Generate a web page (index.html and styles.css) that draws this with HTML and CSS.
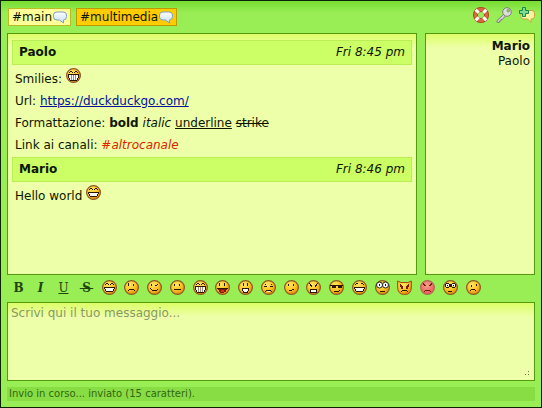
FILE: index.html
```html
<!DOCTYPE html>
<html lang="it">
<head>
<meta charset="utf-8">
<title>Chat</title>
<link rel="stylesheet" href="styles.css">
</head>
<body>
<svg class="defs" aria-hidden="true">
  <defs>
    <radialGradient id="gold" cx="40%" cy="30%" r="70%">
      <stop offset="0" stop-color="#ffe660"/><stop offset=".55" stop-color="#fcc526"/><stop offset="1" stop-color="#e08a10"/>
    </radialGradient>
    <radialGradient id="rose" cx="45%" cy="35%" r="70%">
      <stop offset="0" stop-color="#f4a08c"/><stop offset="1" stop-color="#e85058"/>
    </radialGradient>
    <linearGradient id="bubbleFill" x2="0" y2="1"><stop offset="0" stop-color="#fff"/><stop offset="1" stop-color="#c4def4"/></linearGradient>
  </defs>
  <symbol id="face" viewBox="0 0 15 15"><circle cx="7.5" cy="7.5" r="6.9" fill="url(#gold)" stroke="#8a5a24" stroke-width="1.2"/></symbol>
  <symbol id="bubble" viewBox="0 0 14 13"><path d="M4 1h6Q13.500 1 13.500 4v1.500Q13.500 9 10.500 9V12L6.500 9H4Q.5 9 .5 6V4Q.5 1 4 1z" fill="url(#bubbleFill)" stroke="#7aa0c8"/></symbol>
  <symbol id="grin" viewBox="0 0 15 15"><use href="#face"/><path class="px" d="M4 3h2v1h-2zM3 4h1v1h-1zM6 4h1v1h-1zM9 3h2v1h-2zM8 4h1v1h-1zM11 4h1v1h-1zM2 7h11v2h-1v2h-1v1h-7v-1h-1v-2h-1z"/><path class="white" d="M3 8h9v1h-1v2h-7v-2h-1z"/></symbol>
  <symbol id="sad" viewBox="0 0 15 15"><use href="#face"/><path class="px" d="M4 3h1v3h-1zM9 4h1v2h-1zM5 9h5v1h-5zM4 10h1v1h-1zM10 10h1v1h-1z"/></symbol>
  <symbol id="wink" viewBox="0 0 15 15"><use href="#face"/><path class="px" d="M4 4h1v2h-1zM8 5h2v1h-2zM10 4h1v1h-1zM3 8h1v1h-1zM4 9h1v1h-1zM5 10h5v1h-5zM10 9h1v1h-1z"/></symbol>
  <symbol id="flat" viewBox="0 0 15 15"><use href="#face"/><path class="px" d="M4 4h1v2h-1zM9 4h1v2h-1zM4 9h7v1h-7z"/></symbol>
  <symbol id="teeth" viewBox="0 0 15 15"><use href="#face"/><path class="px" d="M4 3h2v1h-2zM3 4h1v1h-1zM6 4h1v1h-1zM9 3h2v1h-2zM8 4h1v1h-1zM11 4h1v1h-1zM2 6h11v4h-1v2h-1v1h-7v-1h-1v-2h-1z"/><path class="white" d="M3 7h9v3h-1v2h-7v-2h-1z"/><path class="gap" d="M5 7h1v5h-1zM7 7h1v5h-1zM9 7h1v5h-1z"/></symbol>
  <symbol id="laugh" viewBox="0 0 15 15"><use href="#face"/><path class="px" d="M4 3h1v3h-1zM9 3h1v3h-1zM2 8h11v1h-11z"/><path class="mouth" d="M3 9h9v1h-1v2h-2v1h-4v-1h-1v-2h-1z"/><path class="red" d="M6 10h3v2h-3z"/></symbol>
  <symbol id="happy" viewBox="0 0 15 15"><use href="#face"/><path class="px" d="M5 3h1v3h-1zM9 3h1v3h-1zM4 8h7v3h-1v2h-5v-2h-1z"/><path class="white" d="M5 9h5v2h-1v1h-3v-1h-1z"/></symbol>
  <symbol id="tears" viewBox="0 0 15 15"><use href="#face"/><path class="px" d="M3 6h3v1h-3zM9 6h3v1h-3zM4 4h1v1h-1zM10 4h1v1h-1zM5 10h5v1h-5zM4 11h1v1h-1zM10 11h1v1h-1z"/><path class="white" d="M6 11h3v1h-3z"/></symbol>
  <symbol id="unsure" viewBox="0 0 15 15"><use href="#face"/><path class="px" d="M4 4h1v2h-1zM9 4h1v2h-1zM5 10h3v1h-3zM8 9h2v1h-2z"/></symbol>
  <symbol id="angry" viewBox="0 0 15 15"><use href="#face"/><path class="px" d="M3 3h1v1h-1zM4 4h1v2h-1zM5 5h1v2h-1zM11 3h1v1h-1zM10 4h1v2h-1zM9 5h1v2h-1zM4 9h7v4h-7z"/><path class="white" d="M5 10h5v2h-5z"/></symbol>
  <symbol id="cool" viewBox="0 0 15 15"><use href="#face"/><path class="px" d="M1 5h13v1h-1v2h-4v-2h-2v2h-4v-2h-2zM5 11h5v1h-5zM10 10h1v1h-1z"/></symbol>
  <symbol id="cheer" viewBox="0 0 15 15"><use href="#face"/><path class="px" d="M4 3h2v1h-2zM3 4h1v1h-1zM9 3h2v1h-2zM11 4h1v1h-1zM2 7h11v2h-1v2h-1v1h-7v-1h-1v-2h-1z"/><path class="white" d="M3 8h9v1h-1v2h-7v-2h-1z"/></symbol>
  <symbol id="shock" viewBox="0 0 15 15"><use href="#face"/><circle cx="4.500" cy="5" r="3" fill="#fff" stroke="#222"/><circle cx="10.500" cy="5" r="3" fill="#fff" stroke="#222"/><path class="px" d="M4 4h1v2h-1zM10 4h1v2h-1zM5 11h5v1h-5z"/></symbol>
  <symbol id="devil" viewBox="0 0 15 15"><path d="M.6 1v6q0 7.500 6.900 7.500T14.400 7V1L11 2.500H4z" fill="url(#gold)" stroke="#a04c16"/><path class="mouth" d="M3 4h1v1h1v1h1v3h-2v-2h-1zM11 4h1v3h-1v2h-2v-3h1v-1h1z"/><path class="px" d="M5 10h5v1h-5zM4 11h1v1h-1zM10 11h1v1h-1z"/></symbol>
  <symbol id="mad" viewBox="0 0 15 15"><circle cx="7.500" cy="7.500" r="6.900" fill="url(#rose)" stroke="#a87050" stroke-width="1.200"/><path class="mouth" d="M3 3h1v1h1v1h1v1h-2v-1h-1zM11 3h1v2h-1v1h-2v-1h1v-1h1zM5 10h5v1h-5zM4 11h1v1h-1zM10 11h1v1h-1z"/></symbol>
  <symbol id="dizzy" viewBox="0 0 15 15"><use href="#face"/><path class="px" d="M3 3h3v1h-3zM9 3h3v1h-3zM2 4h1v3h-1zM6 4h3v3h-3zM12 4h1v3h-1zM3 7h3v1h-3zM9 7h3v1h-3zM4 5h1v1h-1zM10 5h1v1h-1zM5 11h4v1h-4z"/><path class="white" d="M3 4h3v1h-3zM9 4h3v1h-3zM3 5h1v2h-1zM5 5h1v1h-1zM9 5h1v1h-1zM11 5h1v2h-1z"/></symbol>
  <symbol id="gloomy" viewBox="0 0 15 15"><use href="#face"/><path class="px" d="M5 5h1v2h-1zM10 4h1v2h-1zM5 9h4v1h-4zM4 10h1v1h-1zM9 10h1v1h-1z"/></symbol>
</svg>

<div class="chat">
  <header class="top">
    <nav class="tabs" aria-label="Canali">
      <button class="tab">#main<svg class="bubble"><use href="#bubble"/></svg></button>
      <button class="tab active">#multimedia<svg class="bubble"><use href="#bubble"/></svg></button>
    </nav>
    <div class="actions">
      <button class="action" aria-label="Aiuto"><svg viewBox="0 0 16 16"><circle cx="8" cy="8" r="5.500" fill="none" stroke="#a44020" stroke-width="5"/><circle cx="8" cy="8" r="5.500" fill="none" stroke="#d86840" stroke-width="3.400"/><path d="M2.700 2.700l3 3M13.300 2.700l-3 3M2.700 13.300l3-3M13.300 13.300l-3-3" stroke="#fff" stroke-width="3"/></svg></button>
      <button class="action" aria-label="Password"><svg viewBox="0 0 16 16"><path d="M8.200 6.800L1 13.500V15.300H3.500V14H5V12.500H6.500L9.500 9" fill="#d0d0d0" stroke="#7c8278"/><circle cx="11" cy="5" r="4.300" fill="#dcdcdc" stroke="#7c8278"/><circle cx="12.300" cy="3.700" r="1.300" fill="#8fd45c" stroke="#7c8278" stroke-width=".8"/></svg></button>
      <button class="action" aria-label="Nuovo canale"><svg viewBox="0 0 16 16"><path d="M4 3.500h9q2.500 0 2.500 2.500v3.500q0 2.500-2.500 2.500h-1v3.500L8.500 12H4Q2 12 2 9.500V6q0-2.500 2-2.500z" fill="#f8f3a0" stroke="#c8a43c"/><path d="M3.500.5h3v3h3v3h-3v3h-3v-3h-3v-3h3z" fill="#80de94" stroke="#16884a"/></svg></button>
    </div>
  </header>

  <main class="room">
    <section class="panel messages" aria-label="Messaggi">
      <article>
        <h2 class="head"><span>Paolo</span><time>Fri 8:45 pm</time></h2>
        <div class="body">
          <p>Smilies: <svg class="smiley raised"><use href="#teeth"/></svg></p>
          <p>Url: <a class="url" href="https://duckduckgo.com/">https://duckduckgo.com/</a></p>
          <p>Formattazione: <b>bold</b> <i>italic</i> <u>underline</u> <s>strike</s></p>
          <p>Link ai canali: <a class="channel" href="#altrocanale">#altrocanale</a></p>
        </div>
      </article>
      <article>
        <h2 class="head"><span>Mario</span><time>Fri 8:46 pm</time></h2>
        <div class="body">
          <p>Hello world <svg class="smiley raised"><use href="#grin"/></svg></p>
        </div>
      </article>
    </section>
    <ul class="panel users" aria-label="Utenti">
      <li><b>Mario</b></li>
      <li>Paolo</li>
    </ul>
  </main>

  <div class="toolbar">
    <button class="tool" aria-label="Grassetto"><b>B</b></button>
    <button class="tool" aria-label="Corsivo"><b><i>I</i></b></button>
    <button class="tool" aria-label="Sottolineato"><u>U</u></button>
    <button class="tool" aria-label="Barrato"><b><s>&#8201;S&#8201;</s></b></button>
    <button class="tool" aria-label="Sorriso"><svg class="smiley"><use href="#grin"/></svg></button>
    <button class="tool" aria-label="Triste"><svg class="smiley"><use href="#sad"/></svg></button>
    <button class="tool" aria-label="Occhiolino"><svg class="smiley"><use href="#wink"/></svg></button>
    <button class="tool" aria-label="Neutro"><svg class="smiley"><use href="#flat"/></svg></button>
    <button class="tool" aria-label="Denti"><svg class="smiley"><use href="#teeth"/></svg></button>
    <button class="tool" aria-label="Risata"><svg class="smiley"><use href="#laugh"/></svg></button>
    <button class="tool" aria-label="Felice"><svg class="smiley"><use href="#happy"/></svg></button>
    <button class="tool" aria-label="Pianto"><svg class="smiley"><use href="#tears"/></svg></button>
    <button class="tool" aria-label="Incerto"><svg class="smiley"><use href="#unsure"/></svg></button>
    <button class="tool" aria-label="Arrabbiato"><svg class="smiley"><use href="#angry"/></svg></button>
    <button class="tool" aria-label="Occhiali"><svg class="smiley"><use href="#cool"/></svg></button>
    <button class="tool" aria-label="Allegro"><svg class="smiley"><use href="#cheer"/></svg></button>
    <button class="tool" aria-label="Stupito"><svg class="smiley"><use href="#shock"/></svg></button>
    <button class="tool" aria-label="Diavolo"><svg class="smiley"><use href="#devil"/></svg></button>
    <button class="tool" aria-label="Furioso"><svg class="smiley"><use href="#mad"/></svg></button>
    <button class="tool" aria-label="Stordito"><svg class="smiley"><use href="#dizzy"/></svg></button>
    <button class="tool" aria-label="Cupo"><svg class="smiley"><use href="#gloomy"/></svg></button>
  </div>

  <div class="compose">
    <textarea class="panel input" aria-label="Messaggio" placeholder="Scrivi qui il tuo messaggio..."></textarea>
    <svg class="grip" viewBox="0 0 5 5" aria-hidden="true"><path d="M3 0h1v1h-1zM0 3h1v1h-1zM3 3h1v1h-1z"/></svg>
  </div>
  <footer class="status">Invio in corso... inviato (15 caratteri).</footer>
</div>
</body>
</html>
```
FILE: styles.css
```css
* { box-sizing: border-box; }

body {
  margin: 0;
  font: 12px/15px "DejaVu Sans", sans-serif;
  color: #0c1600;
}

button {
  margin: 0;
  padding: 0;
  border: 0;
  background: none;
  font: inherit;
  color: inherit;
}

svg { display: block; }

.defs { position: absolute; width: 0; height: 0; }
.px { fill: #2c1600; shape-rendering: crispEdges; }
.white { fill: #fff; shape-rendering: crispEdges; }
.gap { fill: #a08c78; shape-rendering: crispEdges; }
.mouth { fill: #7c1c08; shape-rendering: crispEdges; }
.red { fill: #e02c18; shape-rendering: crispEdges; }

.chat {
  display: flex;
  flex-direction: column;
  min-height: 100vh;
  padding: 6px;
  border: 1px solid #0c2404;
  background: linear-gradient(#77dd33, #99ee55 12px);
}

.top {
  display: flex;
  justify-content: space-between;
  padding: 0 0 7px 1px;
}

.tabs { display: flex; gap: 5px; padding-top: 1px; }

.tab {
  display: flex;
  align-items: center;
  height: 18px;
  padding: 0 3px;
  border: 1px solid #bbbb22;
  background: #ffff99;
}

.tab.active { border-color: #bb9900; background: #ffcc00; }
.bubble { width: 14px; height: 13px; margin-left: 1px; }
.actions { display: flex; align-items: flex-start; gap: 7px; }
.action svg { width: 16px; height: 16px; }

.room { display: flex; flex: 1; gap: 8px; }

.panel {
  margin: 0;
  border: 1px solid #559911;
  background: linear-gradient(#ddff66, #eeffaa 14px);
}

.messages { flex: 1; padding: 6px 4px; }

.head {
  display: flex;
  justify-content: space-between;
  margin: 0;
  padding: 4px 6px;
  border: 1px solid #bbee55;
  background: #ccff66;
  font-size: 12px;
  line-height: 15px;
}

.head time { font-weight: normal; font-style: italic; }
.body { padding: 3px 3px 1px; }
.body p { margin: 0; line-height: 22px; }
.smiley { display: inline-block; width: 15px; height: 15px; vertical-align: top; }
.smiley.raised { vertical-align: 0; will-change: transform; }
.url { color: #001199; }
.channel { color: #dd2200; font-style: italic; text-decoration: none; }

.users {
  width: 110px;
  padding: 5px 4px;
  list-style: none;
  text-align: right;
}

.toolbar { display: flex; padding: 5px 2px; }

.tool {
  width: 19px;
  height: 17px;
  line-height: 17px;
  text-align: center;
}

.tool + .tool { margin-left: 4px; }
.tool:nth-child(4n+2) { margin-left: 3px; }

.tool b, .tool u {
  font-family: "DejaVu Serif", serif;
  color: #224411;
}

.compose { position: relative; height: 79px; }

.input {
  display: block;
  width: 100%;
  height: 100%;
  padding: 3px;
  resize: none;
  outline: 0;
  font: inherit;
  color: inherit;
}

.input::placeholder { color: #889966; opacity: 1; }
.grip { position: absolute; right: 5px; bottom: 5px; width: 5px; height: 5px; fill: #667744; }

.status {
  margin-top: 6px;
  padding: 0 2px;
  background: #88dd44;
  color: #336611;
  font-size: 10px;
  line-height: 14px;
}
```
